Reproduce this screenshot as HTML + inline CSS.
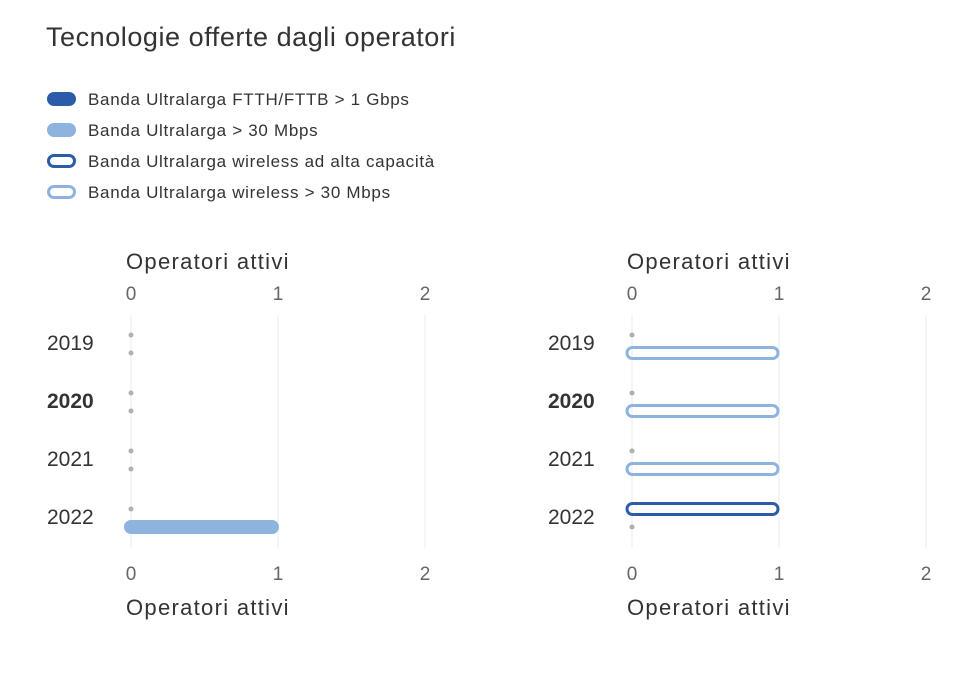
<!DOCTYPE html>
<html><head><meta charset="utf-8"><style>
body{margin:0;width:967px;height:673px;background:#fff;font-family:"Liberation Sans",sans-serif;color:#333;overflow:hidden;position:relative}
.t{position:absolute;white-space:nowrap;line-height:1}
.l{font-size:17px;letter-spacing:0.7px}
</style></head><body>
<div class="t" style="left:46px;top:24px;font-size:27px;color:#333;letter-spacing:0.55px">Tecnologie offerte dagli operatori</div>
<div class="t l" style="left:88px;top:91px">Banda Ultralarga FTTH/FTTB &gt; 1 Gbps</div>
<div class="t l" style="left:88px;top:122px">Banda Ultralarga &gt; 30 Mbps</div>
<div class="t l" style="left:88px;top:153px">Banda Ultralarga wireless ad alta capacità</div>
<div class="t l" style="left:88px;top:184px">Banda Ultralarga wireless &gt; 30 Mbps</div>
<svg width="967" height="673" style="position:absolute;left:0;top:0" font-family="Liberation Sans, sans-serif">
<rect x="47" y="92" width="29" height="14" rx="7" fill="#2a5caa"/>
<rect x="47" y="123" width="29" height="14" rx="7" fill="#8db3df"/>
<rect x="48.5" y="155.5" width="26" height="11" rx="5.5" fill="none" stroke="#2a5caa" stroke-width="3"/>
<rect x="48.5" y="186.5" width="26" height="11" rx="5.5" fill="none" stroke="#8db3df" stroke-width="3"/>
<g stroke="#ebebeb" stroke-width="1">
<line x1="131" y1="315" x2="131" y2="548"/><line x1="278" y1="315" x2="278" y2="548"/><line x1="425" y1="315" x2="425" y2="548"/>
<line x1="632" y1="315" x2="632" y2="548"/><line x1="779" y1="315" x2="779" y2="548"/><line x1="926" y1="315" x2="926" y2="548"/>
</g>
<g fill="#666" font-size="19" text-anchor="middle">
<text x="131" y="300">0</text><text x="278" y="300">1</text><text x="425" y="300">2</text>
<text x="131" y="580">0</text><text x="278" y="580">1</text><text x="425" y="580">2</text>
<text x="632" y="300">0</text><text x="779" y="300">1</text><text x="926" y="300">2</text>
<text x="632" y="580">0</text><text x="779" y="580">1</text><text x="926" y="580">2</text>
</g>
<g fill="#333" font-size="22" letter-spacing="1.3">
<text x="126" y="269">Operatori attivi</text><text x="126" y="615">Operatori attivi</text>
<text x="627" y="269">Operatori attivi</text><text x="627" y="615">Operatori attivi</text>
</g>
<g fill="#333" font-size="21">
<text x="47" y="350">2019</text><text x="47" y="408" font-weight="bold">2020</text><text x="47" y="466">2021</text><text x="47" y="524">2022</text>
<text x="548" y="350">2019</text><text x="548" y="408" font-weight="bold">2020</text><text x="548" y="466">2021</text><text x="548" y="524">2022</text>
</g>
<g fill="#b0b0b0">
<circle cx="131" cy="335" r="2.5"/><circle cx="131" cy="353" r="2.5"/><circle cx="131" cy="393" r="2.5"/><circle cx="131" cy="411" r="2.5"/>
<circle cx="131" cy="451" r="2.5"/><circle cx="131" cy="469" r="2.5"/><circle cx="131" cy="509" r="2.5"/>
<circle cx="632" cy="335" r="2.5"/><circle cx="632" cy="393" r="2.5"/><circle cx="632" cy="451" r="2.5"/><circle cx="632" cy="527" r="2.5"/>
</g>
<rect x="124" y="520" width="155" height="14" rx="7" fill="#8db3df"/>
<g fill="none" stroke-width="3">
<rect x="627" y="347.5" width="151" height="11" rx="5.5" stroke="#8db3df"/>
<rect x="627" y="405.5" width="151" height="11" rx="5.5" stroke="#8db3df"/>
<rect x="627" y="463.5" width="151" height="11" rx="5.5" stroke="#8db3df"/>
<rect x="627" y="503.5" width="151" height="11" rx="5.5" stroke="#2a5caa"/>
</g>
</svg>
</body></html>
